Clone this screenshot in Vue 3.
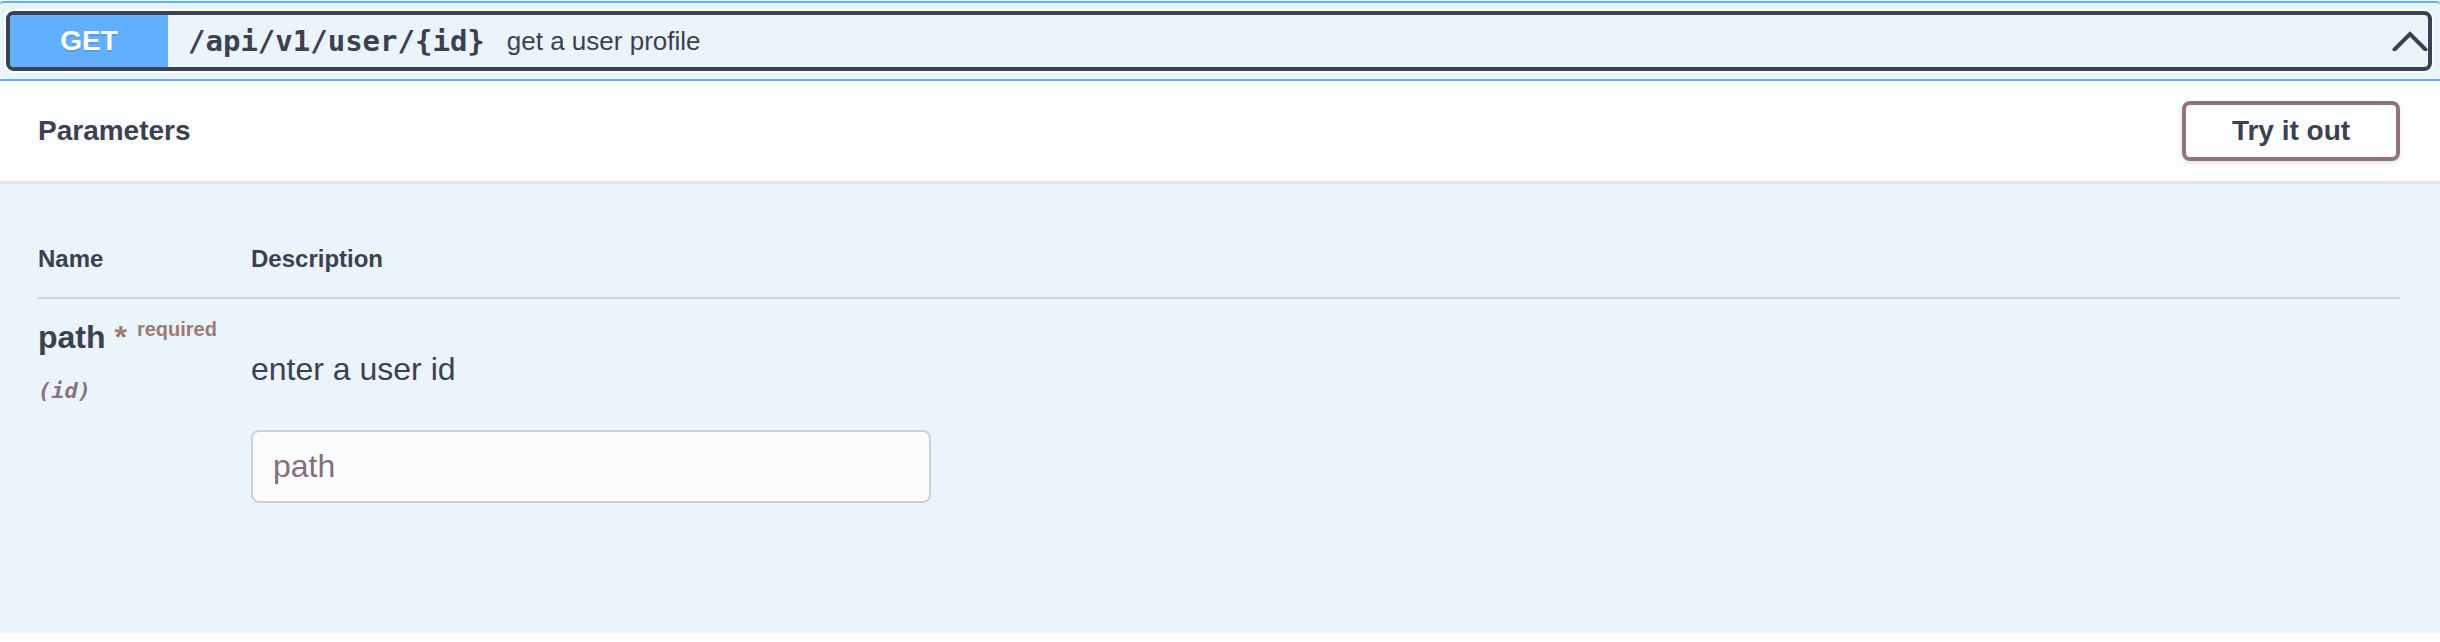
<script setup>
import { ref } from 'vue'

const operation = {
  method: 'GET',
  path: '/api/v1/user/{id}',
  summary: 'get a user profile',
}
const parameters = [
  { name: 'path', location: '(id)', required: true, description: 'enter a user id' },
]
const values = ref({ path: '' })
</script>

<template>
  <main class="opblock">
    <div class="summary">
      <button type="button" class="summary-control" aria-expanded="true">
        <span class="method">{{ operation.method }}</span>
        <span class="path">{{ operation.path }}</span>
        <span class="text">{{ operation.summary }}</span>
        <svg class="arrow" viewBox="0 0 36 20" aria-hidden="true">
          <path d="M2.5 18.5 L18 3 L33.5 18.5" />
        </svg>
      </button>
    </div>

    <header class="section-header">
      <h4>Parameters</h4>
      <button type="button" class="try-out">Try it out</button>
    </header>

    <section class="parameters">
      <table>
        <thead>
          <tr>
            <th class="name-col" scope="col">Name</th>
            <th scope="col">Description</th>
          </tr>
        </thead>
        <tbody>
          <tr v-for="p in parameters" :key="p.name">
            <td>
              <label class="param-name" :for="'param-' + p.name">{{ p.name }} <span v-if="p.required" class="star">*</span><sup v-if="p.required">required</sup></label>
              <div class="location">{{ p.location }}</div>
            </td>
            <td>
              <p class="description">{{ p.description }}</p>
              <input :id="'param-' + p.name" v-model="values[p.name]" type="text" :placeholder="p.name" />
            </td>
          </tr>
        </tbody>
      </table>
    </section>
  </main>
</template>

<style>
body {
  background: #fcfdff;
}
</style>

<style scoped>
.opblock {
  box-sizing: border-box;
  padding-top: 1px;
  background: #ebf3fb;
  color: #3b4151;
  font-family: "Liberation Sans", Arial, sans-serif;
}

.summary {
  padding: 8px 8px 8px 6px;
  border-top: 2px solid #61affe;
  border-bottom: 2px solid #61affe;
  border-radius: 4px 4px 0 0;
}

.summary-control {
  display: flex;
  align-items: center;
  width: 100%;
  height: 60px;
  padding: 0;
  border: 4px solid #3b4151;
  border-radius: 8px;
  box-shadow: 0 0 0 2px #fcfdff;
  background: transparent;
  color: inherit;
  font-family: inherit;
  text-align: left;
}

.method {
  align-self: stretch;
  width: 158px;
  border-radius: 4px 0 0 4px;
  background: #61affe;
  color: #fff;
  font-size: 28px;
  font-weight: 700;
  line-height: 52px;
  text-align: center;
  text-shadow: 0 2px 0 rgba(0, 0, 0, 0.1);
}

.path {
  padding: 0 22px 0 20px;
  font-family: "DejaVu Sans Mono", Consolas, monospace;
  font-size: 29px;
  font-weight: 700;
}

.text {
  flex: 1;
  font-size: 26px;
}

.arrow {
  width: 36px;
  height: 20px;
  fill: none;
  stroke: #3b4151;
  stroke-width: 4;
  stroke-linecap: round;
}

.section-header {
  position: relative;
  display: flex;
  align-items: center;
  justify-content: space-between;
  padding: 20px 40px 20px 38px;
  background: #fcfdff;
  box-shadow: 0 3px 1px #dce4ec;
}

h4 {
  margin: 0;
  font-size: 28px;
  line-height: 32px;
}

.try-out {
  width: 218px;
  height: 60px;
  padding: 0;
  border: 4px solid #91737a;
  border-radius: 8px;
  box-shadow: 0 2px 4px rgba(0, 0, 0, 0.1);
  background: #fcfdff;
  color: inherit;
  font-family: inherit;
  font-size: 28px;
  font-weight: 700;
}

.parameters {
  padding: 40px 40px 130px 38px;
}

table {
  width: 100%;
  border-collapse: collapse;
}

th {
  padding: 24px 0;
  border-bottom: 2px solid #cdd1d6;
  font-size: 24px;
  line-height: 28px;
  text-align: left;
}

.name-col {
  width: 213px;
}

td {
  padding: 18px 0 0;
  vertical-align: top;
}

.param-name {
  display: block;
  font-size: 32px;
  font-weight: 700;
  line-height: 40px;
}

.star,
sup {
  color: #9c7b76;
}

sup {
  padding-left: 10px;
  font-size: 20px;
  line-height: 0;
}

.location {
  margin-top: 22px;
  color: #8c7382;
  font-family: "DejaVu Sans Mono", Consolas, monospace;
  font-size: 22px;
  font-style: italic;
  font-weight: 700;
  line-height: 24px;
}

.description {
  margin: 32px 0 41px;
  font-size: 32px;
  line-height: 40px;
}

input {
  box-sizing: border-box;
  display: block;
  width: 100%;
  max-width: 680px;
  height: 73px;
  padding: 0 20px;
  border: 2px solid #cdd1d6;
  border-radius: 8px;
  background: #f9fbfd;
  color: inherit;
  font-family: inherit;
  font-size: 32px;
}

input::placeholder {
  color: #846e7c;
  opacity: 1;
}
</style>
